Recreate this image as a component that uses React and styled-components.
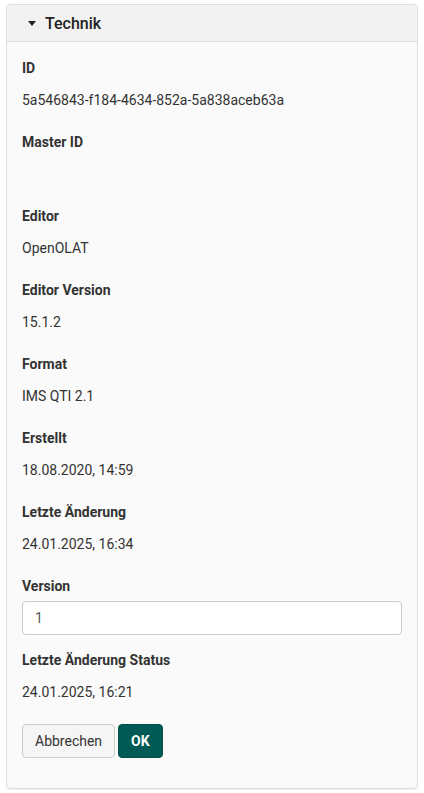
import React from "react";
import styled, { createGlobalStyle } from "styled-components";

const GlobalStyle = createGlobalStyle`
  body {
    margin: 0;
    background: #ffffff;
    font-family: Roboto, "Liberation Sans", sans-serif;
    font-size: 14px;
    color: #333;
  }
  * { box-sizing: border-box; }
`;

const Panel = styled.section`
  margin: 4px 6px;
  border: 1px solid #ddd;
  border-radius: 4px;
  background: #fafafa;
  box-shadow: 0 1px 1px rgba(0, 0, 0, 0.05);
  overflow: hidden;
`;

const PanelHeading = styled.div`
  display: flex;
  align-items: center;
  gap: 9px;
  height: 37px;
  padding: 0 15px 0 21px;
  background: #f2f2f2;
  border-bottom: 1px solid #ddd;
  font-size: 16px;
  font-weight: 500;
  color: #222;
`;

const Caret = styled.span`
  width: 0;
  height: 0;
  border-left: 4.5px solid transparent;
  border-right: 4.5px solid transparent;
  border-top: 5px solid #222;
  margin-top: 1px;
`;

const PanelBody = styled.div`
  padding: 16px 15px 15px;
`;

const FormGroup = styled.div`
  margin-bottom: 15px;
`;

const Label = styled.div`
  font-weight: 700;
  line-height: 20px;
  margin-bottom: 5px;
  color: #333;
`;

const Static = styled.div`
  min-height: 34px;
  padding: 7px 0;
  line-height: 20px;
  color: #333;
`;

const Input = styled.input`
  display: block;
  width: 100%;
  height: 34px;
  padding: 6px 12px;
  font: inherit;
  font-size: 14px;
  color: #555;
  background: #fff;
  border: 1px solid #ccc;
  border-radius: 4px;
  outline: none;
`;

const Buttons = styled.div`
  display: flex;
  gap: 3px;
  margin-bottom: 15px;
`;

const Button = styled.button`
  height: 34px;
  padding: 6px 12px;
  font: inherit;
  font-size: 14px;
  border-radius: 4px;
  border: 1px solid ${(p) => (p.$primary ? "#014e4a" : "#ccc")};
  background: ${(p) => (p.$primary ? "#015a55" : "#f5f5f5")};
  color: ${(p) => (p.$primary ? "#fff" : "#333")};
  font-weight: ${(p) => (p.$primary ? 700 : 400)};
  cursor: pointer;
`;

const fields = [
  ["ID", "5a546843-f184-4634-852a-5a838aceb63a"],
  ["Master ID", ""],
  ["Editor", "OpenOLAT"],
  ["Editor Version", "15.1.2"],
  ["Format", "IMS QTI 2.1"],
  ["Erstellt", "18.08.2020, 14:59"],
  ["Letzte Änderung", "24.01.2025, 16:34"],
];

export default function App() {
  return (
    <>
      <GlobalStyle />
      <Panel>
        <PanelHeading>
          <Caret />
          Technik
        </PanelHeading>
        <PanelBody>
          {fields.map(([label, value]) => (
            <FormGroup key={label}>
              <Label>{label}</Label>
              <Static>{value}</Static>
            </FormGroup>
          ))}
          <FormGroup>
            <Label>Version</Label>
            <Input defaultValue="1" />
          </FormGroup>
          <FormGroup>
            <Label>Letzte Änderung Status</Label>
            <Static>24.01.2025, 16:21</Static>
          </FormGroup>
          <Buttons>
            <Button>Abbrechen</Button>
            <Button $primary>OK</Button>
          </Buttons>
        </PanelBody>
      </Panel>
    </>
  );
}
